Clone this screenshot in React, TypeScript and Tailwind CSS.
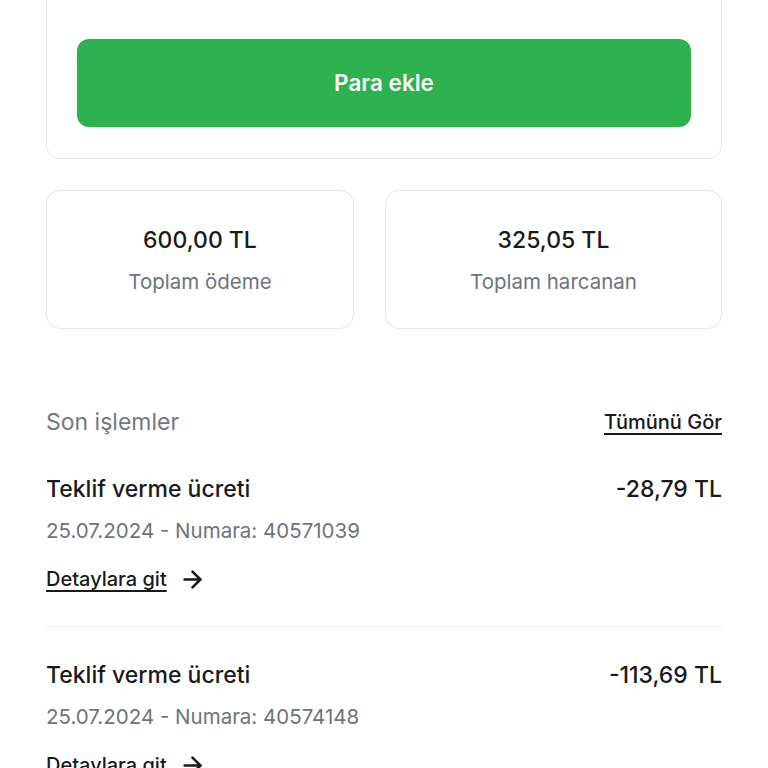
import { ArrowRight } from "lucide-react";

const transactions = [
	{ title: "Teklif verme ücreti", amount: "-28,79 TL", date: "25.07.2024", no: "40571039" },
	{ title: "Teklif verme ücreti", amount: "-113,69 TL", date: "25.07.2024", no: "40574148" },
];

function Stat({ value, label }: { value: string; label: string }) {
	return (
		<div className="flex h-[139px] flex-col items-center rounded-[14px] border border-[#e6e6e6] bg-white pt-[37px]">
			<div className="h-[24px] text-[23px] font-medium leading-[24px] text-[#1a1a1a]">{value}</div>
			<div className="mt-[19px] h-[22px] text-[20.5px] leading-[22px] text-[#6f747a]">{label}</div>
		</div>
	);
}

export default function App() {
	return (
		<div className="h-[768px] overflow-hidden bg-white px-[46px] font-['Inter',sans-serif] text-[#1a1a1a]">
			<div className="-mt-[20px] rounded-b-[14px] border border-t-0 border-[#e6e6e6] px-[30px] pb-[31px] pt-[59px]">
				<button
					type="button"
					className="flex h-[88px] w-full items-center justify-center rounded-[12px] bg-[#2eb14f] text-[22.5px] font-semibold text-white"
				>
					Para ekle
				</button>
			</div>

			<div className="mt-[31px] grid grid-cols-[308px_1fr] gap-[31px]">
				<Stat value="600,00 TL" label="Toplam ödeme" />
				<Stat value="325,05 TL" label="Toplam harcanan" />
			</div>

			<div className="mt-[78px] flex h-[30px] items-center justify-between">
				<span className="text-[23px] text-[#737880]">Son işlemler</span>
				<a className="text-[20px] font-medium text-[#1a1a1a] underline underline-offset-[4px]">Tümünü Gör</a>
			</div>

			<div className="mt-[37px]">
				{transactions.map((t, i) => (
					<div key={t.no} className={i > 0 ? "border-t border-[#ececec] pt-[33px]" : ""}>
						<div className="flex h-[30px] items-center justify-between">
							<span className="text-[23px] font-medium">{t.title}</span>
							<span className="text-[23px] font-medium">{t.amount}</span>
						</div>
						<div className="mt-[14px] h-[26px] text-[20.5px] leading-[26px] text-[#6f747a]">
							{t.date} - Numara: {t.no}
						</div>
						<div className="mt-[22px] flex h-[26px] items-center gap-[12px] pb-0">
							<span className="text-[20px] font-medium underline underline-offset-[4px]">Detaylara git</span>
							<ArrowRight size={27} strokeWidth={2.3} />
						</div>
						<div className="h-[34px]" />
					</div>
				))}
			</div>
		</div>
	);
}
